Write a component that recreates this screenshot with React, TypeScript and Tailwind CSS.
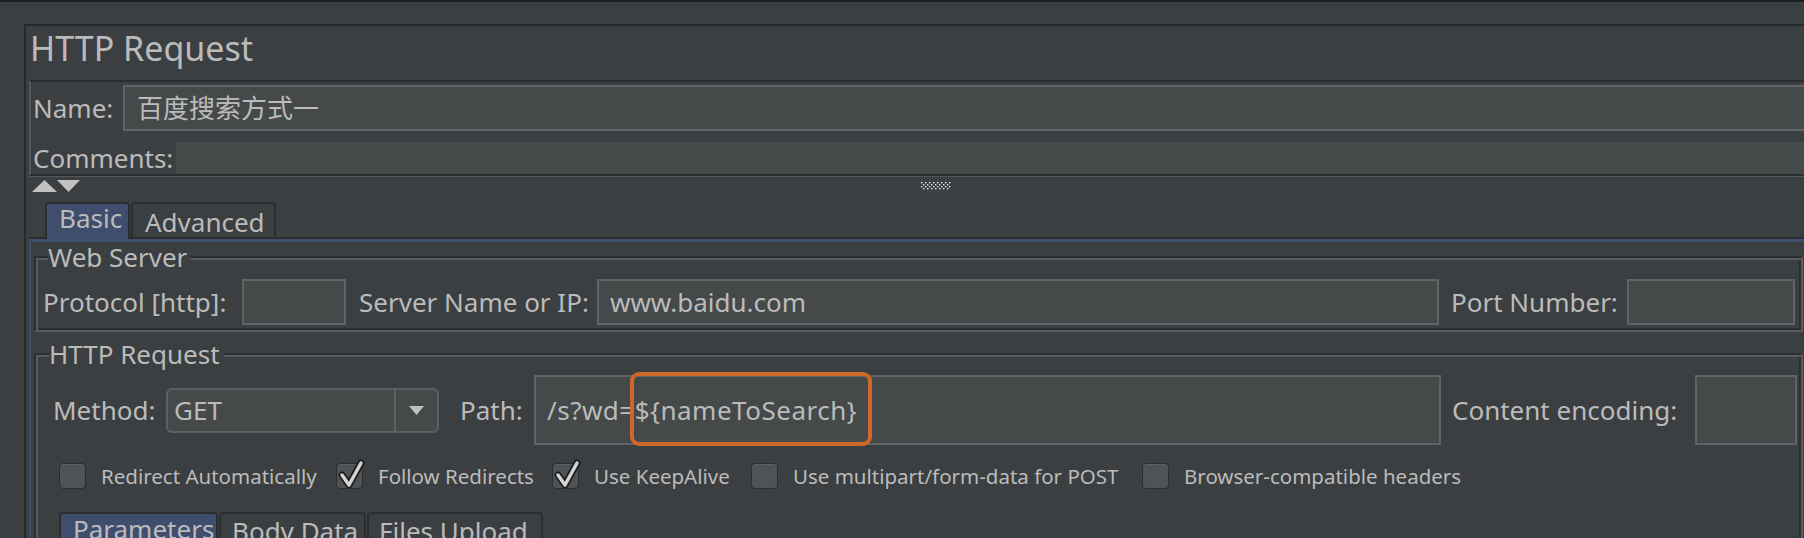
import React from 'react'

const field = 'border-2 border-[#616365] bg-[#45494a]'

function Check({ checked }: { checked?: boolean }) {
  return (
    <div className="relative h-[26px] w-[27px] shrink-0 rounded-[4px] border border-[#2b2d2f] bg-[#505355] shadow-[inset_0_1px_0_#5e6163]">
      {checked && (
        <svg className="absolute left-[0px] top-[-5px]" width="28" height="32" viewBox="0 0 28 32">
          <path d="M5 16 L12 26 L24 4" fill="none" stroke="#1d1e20" strokeWidth="7" strokeLinecap="round" strokeLinejoin="round" />
          <path d="M5 16 L12 26 L24 4" fill="none" stroke="#d4d4d4" strokeWidth="3.5" strokeLinecap="round" strokeLinejoin="round" />
        </svg>
      )}
    </div>
  )
}

function CheckItem({ label, checked, w }: { label: string; checked?: boolean; w?: string }) {
  return (
    <div className={`flex items-center ${w ?? ''}`}>
      <Check checked={checked} />
      <span className="ml-[15px] whitespace-nowrap text-[20.5px] leading-[26px]">{label}</span>
    </div>
  )
}

function Dots() {
  const cells = []
  for (let r = 0; r < 4; r++) {
    for (let c = 0; c < 15; c++) {
      if ((r + c) % 2 === 0) cells.push(<rect key={`${r}-${c}`} x={c * 2} y={r * 2} width="1.4" height="1.4" fill="#e6e6e6" />)
    }
  }
  return (
    <svg width="30" height="8" viewBox="0 0 30 8">
      {cells}
    </svg>
  )
}

export default function App() {
  return (
    <div className="h-[538px] w-[1804px] overflow-hidden border-t-2 border-[#1e1f21] bg-[#3c3f41] font-[family-name:Noto_Sans,Noto_Sans_CJK_SC,sans-serif] text-[#bbbbbb]">
      <div className="pl-[24px] pt-[22px]">
        <div className="border-l-2 border-t-2 border-[#27292b]">
          {/* title */}
          <div className="h-[54px] pl-[4px] pt-[5px] text-[34px] leading-[34px]">HTTP Request</div>

          {/* name + comments */}
          <div className="-mr-[12px] ml-[3px] border-b-2 border-l-2 border-t-2 border-b-[#2b2d2f] border-l-[#56595b] border-t-[#2b2d2f] shadow-[0_1px_0_#54575a]">
            <div className="mt-[3px] flex h-[46px] items-center">
              <span className="w-[92px] shrink-0 pl-[2px] text-[26px] leading-[26px]">Name:</span>
              <div className={`flex h-full flex-1 items-center pl-[12px] text-[26px] ${field}`}>百度搜索方式一</div>
            </div>
            <div className="mt-[11px] flex h-[32px] items-center">
              <span className="w-[145px] shrink-0 pl-[2px] text-[26px] leading-[26px]">Comments:</span>
              <div className="h-full flex-1 bg-[#45494a]" />
            </div>
          </div>

          {/* splitter arrows */}
          <div className="mt-[4px] flex h-[12px] items-start">
            <svg className="ml-[6px]" width="48" height="12" viewBox="0 0 48 12">
              <polygon points="0,12 12.5,0 25,12" fill="#c2c2c2" />
              <polygon points="25,0 48,0 36.5,12" fill="#c2c2c2" />
            </svg>
            <div className="ml-[841px] mt-[2px]">
              <Dots />
            </div>
          </div>

          {/* tabs */}
          <div className="ml-[3px] mt-[10px]">
            <div className="flex h-[37px] items-end gap-[1px] border-b-2 border-[#2a2c2e] pl-[16px]">
              <div className="-mb-[2px] h-[37px] w-[85px] rounded-t-[4px] border-2 border-b-0 border-[#2b2d2f] bg-[#3f4e6c] pl-[12px] pt-[1px] text-[26px] leading-[26px]">
                Basic
              </div>
              <div className="-mb-[2px] h-[37px] w-[145px] rounded-t-[4px] border-2 border-[#2b2d2f] pl-[12px] pt-[5px] text-[26px] leading-[26px]">
                Advanced
              </div>
            </div>

            <div className="border-l-2 border-t-[3px] border-[#3e4f6d]">
              {/* Web Server */}
              <fieldset className="ml-[3px] mr-[1px] mt-[2px] border-2 border-b-[#595b5d] border-l-[#2c2e30] border-r-[#595b5d] border-t-[#2c2e30] pb-[5px] shadow-[inset_2px_2px_0_#595b5d,inset_-2px_-2px_0_#2c2e30]">
                <legend className="ml-[12px] bg-[#3c3f41] pr-[4px] text-[26px] leading-[26px]">Web Server</legend>
                <div className="mt-[9px] flex h-[46px] items-center text-[26px] leading-[26px]">
                  <span className="w-[206px] shrink-0 whitespace-nowrap pl-[7px]">Protocol [http]:</span>
                  <div className={`h-full w-[104px] shrink-0 ${field}`} />
                  <span className="w-[251px] shrink-0 whitespace-nowrap pl-[13px]">Server Name or IP:</span>
                  <div className={`flex h-full flex-1 items-center pl-[11px] ${field}`}>www.baidu.com</div>
                  <span className="w-[188px] shrink-0 whitespace-nowrap pl-[12px]">Port Number:</span>
                  <div className={`mr-[6px] h-full w-[168px] shrink-0 ${field}`} />
                </div>
              </fieldset>

              {/* HTTP Request */}
              <fieldset className="ml-[3px] mr-[1px] mt-[9px] h-[220px] border-2 border-b-[#595b5d] border-l-[#2c2e30] border-r-[#595b5d] border-t-[#2c2e30] shadow-[inset_2px_2px_0_#595b5d,inset_-2px_-2px_0_#2c2e30]">
                <legend className="ml-[13px] bg-[#3c3f41] pr-[4px] text-[26px] leading-[26px]">HTTP Request</legend>
                <div className="mt-[8px] flex h-[70px] items-center text-[26px] leading-[26px]">
                  <span className="w-[130px] shrink-0 pl-[17px]">Method:</span>
                  <div className="flex h-[45px] w-[273px] shrink-0 rounded-[6px] border-2 border-[#5d5f61] bg-[#45494a]">
                    <div className="flex flex-1 items-center pl-[6px]">GET</div>
                    <div className="flex w-[43px] items-center justify-center border-l-2 border-[#5d5f61]">
                      <svg width="15" height="9" viewBox="0 0 15 9">
                        <polygon points="0,0 15,0 7.5,9" fill="#c0c0c0" />
                      </svg>
                    </div>
                  </div>
                  <span className="w-[95px] shrink-0 pl-[21px]">Path:</span>
                  <div className={`relative flex h-full flex-1 items-center pl-[11px] ${field}`}>
                    <span className="tracking-[0.5px]">{'/s?wd=${nameToSearch}'}</span>
                    <div className="absolute left-[94px] top-[-5px] h-[74px] w-[242px] rounded-[9px] border-4 border-[#d0672a]" />
                  </div>
                  <span className="w-[254px] shrink-0 whitespace-nowrap pl-[11px]">Content encoding:</span>
                  <div className={`mr-[4px] h-full w-[102px] shrink-0 ${field}`} />
                </div>

                <div className="ml-[23px] mt-[18px] flex h-[26px] items-center">
                  <CheckItem w="w-[277px]" label="Redirect Automatically" />
                  <CheckItem w="w-[216px]" checked label="Follow Redirects" />
                  <CheckItem w="w-[199px]" checked label="Use KeepAlive" />
                  <CheckItem w="w-[391px]" label="Use multipart/form-data for POST" />
                  <CheckItem label="Browser-compatible headers" />
                </div>

                <div className="ml-[23px] mt-[23px] flex gap-[1px] text-[26px] leading-[26px]">
                  <div className="h-[40px] w-[159px] rounded-t-[4px] border-2 border-[#2b2d2f] bg-[#3f4e6c] pl-[12px] pt-[2px]">Parameters</div>
                  <div className="h-[40px] w-[147px] whitespace-nowrap rounded-t-[4px] border-2 border-[#2b2d2f] pl-[11px] pt-[4px]">Body Data</div>
                  <div className="h-[40px] w-[176px] whitespace-nowrap rounded-t-[4px] border-2 border-[#2b2d2f] pl-[10px] pt-[4px]">Files Upload</div>
                </div>
              </fieldset>
            </div>
          </div>
        </div>
      </div>
    </div>
  )
}
